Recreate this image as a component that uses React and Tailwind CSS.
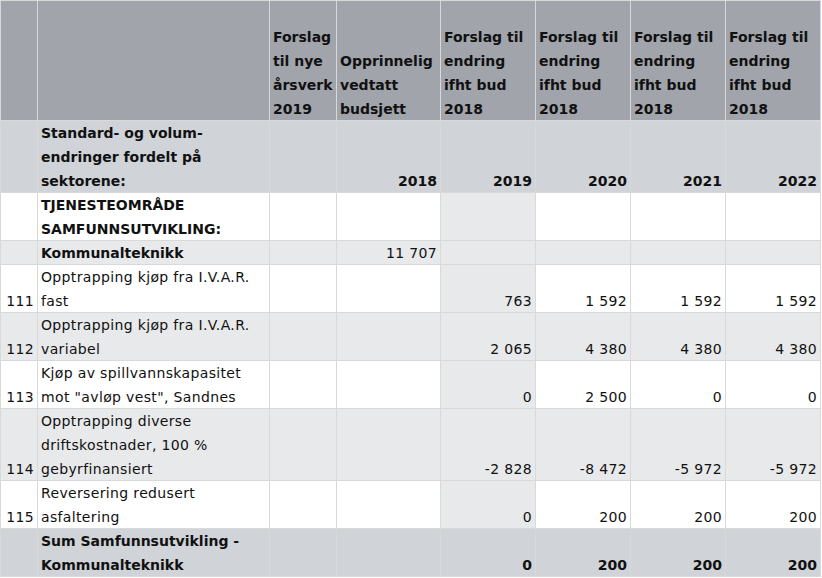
import React from 'react';

const HEAD = 'bg-[#a1a5ab]';
const MID = 'bg-[#d0d3d7]';
const ALT = 'bg-[#e8e9eb]';
const WHITE = 'bg-white';

const rows = [
  {
    bg: HEAD, bold: true,
    cells: ['', '', ['Forslag', 'til nye', 'årsverk', '2019'], ['Opprinnelig', 'vedtatt', 'budsjett'],
      ['Forslag til', 'endring', 'ifht bud', '2018'], ['Forslag til', 'endring', 'ifht bud', '2018'],
      ['Forslag til', 'endring', 'ifht bud', '2018'], ['Forslag til', 'endring', 'ifht bud', '2018']],
    left: true,
  },
  {
    bg: MID, bold: true,
    cells: ['', ['Standard- og volum-', 'endringer fordelt på', 'sektorene:'], '', '2018', '2019', '2020', '2021', '2022'],
  },
  {
    bg: WHITE, bold: true, hl: true,
    cells: ['', ['TJENESTEOMRÅDE', 'SAMFUNNSUTVIKLING:'], '', '', '', '', '', ''],
  },
  {
    bg: ALT, boldLabel: true,
    cells: ['', 'Kommunalteknikk', '', '11 707', '', '', '', ''],
  },
  {
    bg: WHITE, hl: true,
    cells: ['111', ['Opptrapping kjøp fra I.V.A.R.', 'fast'], '', '', '763', '1 592', '1 592', '1 592'],
  },
  {
    bg: ALT,
    cells: ['112', ['Opptrapping kjøp fra I.V.A.R.', 'variabel'], '', '', '2 065', '4 380', '4 380', '4 380'],
  },
  {
    bg: WHITE, hl: true,
    cells: ['113', ['Kjøp av spillvannskapasitet', 'mot "avløp vest", Sandnes'], '', '', '0', '2 500', '0', '0'],
  },
  {
    bg: ALT,
    cells: ['114', ['Opptrapping diverse', 'driftskostnader, 100 %', 'gebyrfinansiert'], '', '', '-2 828', '-8 472', '-5 972', '-5 972'],
  },
  {
    bg: WHITE, hl: true,
    cells: ['115', ['Reversering redusert', 'asfaltering'], '', '', '0', '200', '200', '200'],
  },
  {
    bg: MID, bold: true,
    cells: ['', ['Sum Samfunnsutvikling -', 'Kommunalteknikk'], '', '', '0', '200', '200', '200'],
  },
];

const Cell = ({ value, bg, bold, left }) => {
  const lines = Array.isArray(value) ? value : value ? [value] : [];
  return (
    <div className={`${bg} flex flex-col justify-end px-[3px] ${left ? 'items-start' : ''}`}>
      <div className={`mb-[-1px] flex flex-col ${left ? 'items-start' : 'items-end'}`}>
        {lines.map((l, i) => (
          <span
            key={i}
            className={`block whitespace-nowrap leading-6 ${bold ? 'font-bold' : 'font-normal tracking-[0.35px]'}`}
          >
            {l}
          </span>
        ))}
      </div>
    </div>
  );
};

const App = () => {
  return (
    <div className="min-h-screen bg-white">
      <div
        className="grid w-[821px] gap-px border border-[#d9d9d9] bg-[#d9d9d9] text-[14px] text-[#111] grid-cols-[36px_231px_66px_103px_94px_94px_94px_94px] grid-rows-[119px_71px_47px_23px_47px_47px_47px_71px_47px_47px]"
        style={{ fontFamily: '"DejaVu Sans", sans-serif' }}
      >
        {rows.map((row, r) =>
          row.cells.map((c, i) => {
            const bg = row.hl && i === 4 ? ALT : row.bg;
            const left = row.left || i === 1;
            const bold = row.bold || (row.boldLabel && i === 1);
            return <Cell key={`${r}-${i}`} value={c} bg={bg} bold={bold} left={left} />;
          })
        )}
      </div>
    </div>
  );
};

export default App;
